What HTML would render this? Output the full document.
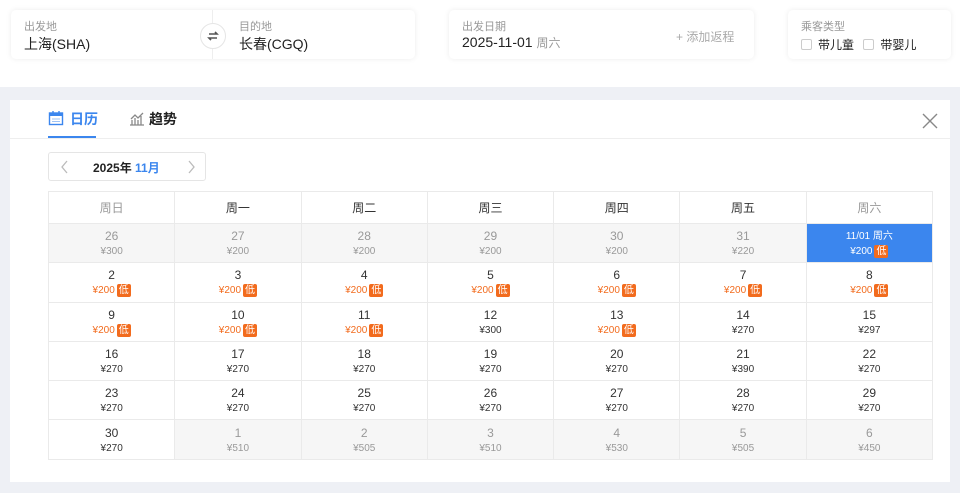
<!DOCTYPE html>
<html><head><meta charset="utf-8"><style>
*{margin:0;padding:0;box-sizing:border-box}
body{width:960px;height:493px;background:#fff;font-family:"Liberation Sans","Noto Sans CJK SC",sans-serif;position:relative;overflow:hidden;color:#222}
.card{position:absolute;top:10px;height:49px;background:#fff;border-radius:5px;box-shadow:0 0 6px rgba(0,0,0,.08)}
.lab{position:absolute;top:8px;font-size:11px;color:#999}
.val{position:absolute;top:24px;font-size:14px;color:#222}
.band{position:absolute;left:0;top:87px;width:960px;height:406px;background:#eef0f5}
.panel{position:absolute;left:10px;top:100px;width:940px;height:382px;background:#fff}
table{position:absolute;left:48px;top:191px;border-collapse:collapse;table-layout:fixed;width:885px}
td,th{border:1px solid #eaeaea;text-align:center;font-weight:normal;font-size:12px}
th{height:32px;color:#333}
th.g{color:#999}
td{height:39.3px;line-height:15px;padding-top:2px}
td .d{font-size:12px;color:#333}
td .p{font-size:10px;color:#333}
td.o{background:#f6f6f6}
td.o .d,td.o .p{color:#999}
td .p.l{color:#f26b1d}
.b{display:inline-block;background:#f26b1d;color:#fff;font-size:10px;line-height:13px;padding:0 2px;margin-left:2px;border-radius:2px}
td.s{background:#3b86ee}
td.s .d,td.s .p{color:#fff}
.cb{display:inline-block;width:11px;height:11px;border:1px solid #ccc;border-radius:2px;vertical-align:-1px;margin-right:6px}
</style></head><body>
<div class="card" style="left:11px;width:404px">
 <div class="lab" style="left:13px">出发地</div><div class="val" style="left:13px">上海(SHA)</div>
 <div style="position:absolute;left:201px;top:0;width:1px;height:49px;background:#eee"></div>
 <div style="position:absolute;left:189px;top:13px;width:26px;height:26px;border:1px solid #e5e5e5;border-radius:50%;background:#fff">
  <svg width="24" height="24" viewBox="0 0 24 24" style="position:absolute;left:0;top:0"><path d="M8 10h8l-2-2M16 14H8l2 2" stroke="#555" stroke-width="1.6" fill="none"/></svg></div>
 <div class="lab" style="left:228px">目的地</div><div class="val" style="left:228px">长春(CGQ)</div>
</div>
<div class="card" style="left:449px;width:305px">
 <div class="lab" style="left:13px">出发日期</div><div class="val" style="left:13px">2025-11-01 <span style="color:#999;font-size:12px">周六</span></div>
 <div style="position:absolute;left:227px;top:18px;font-size:12px;color:#aaa">+ 添加返程</div>
</div>
<div class="card" style="left:788px;width:163px">
 <div class="lab" style="left:13px">乘客类型</div>
 <div class="val" style="left:13px;font-size:12px;top:26px"><span class="cb"></span>带儿童 <span class="cb" style="margin-left:6px"></span>带婴儿</div>
</div>
<div class="band"></div>
<div class="panel">
 <svg width="16" height="16" viewBox="0 0 16 16" style="position:absolute;left:38px;top:10px"><rect x="1.5" y="3" width="13" height="11.5" fill="none" stroke="#3b86ee" stroke-width="1.4"/><rect x="1.5" y="3" width="13" height="3" fill="#3b86ee"/><path d="M5 1v3M11 1v3" stroke="#3b86ee" stroke-width="1.4"/><path d="M4.5 9h7M4.5 11.5h7" stroke="#3b86ee" stroke-width="1" stroke-dasharray="1 1"/></svg>
 <div style="position:absolute;left:60px;top:9px;font-size:14px;color:#3b86ee;font-weight:bold">日历</div>
 <div style="position:absolute;left:38px;top:36px;width:48px;height:2px;background:#3b86ee"></div>
 <svg width="16" height="16" viewBox="0 0 16 16" style="position:absolute;left:119px;top:10px"><path d="M1 15h14M3 15V10M6 15V8M9 15V10M12 15V6M2 9l4-4 3 3 5-5" stroke="#888" stroke-width="1.3" fill="none"/></svg>
 <div style="position:absolute;left:139px;top:9px;font-size:14px;color:#222;font-weight:bold">趋势</div>
 <div style="position:absolute;left:0;top:38px;width:940px;height:1px;background:#eee"></div>
 <svg width="20" height="20" viewBox="0 0 20 20" style="position:absolute;left:910px;top:11px"><path d="M3 3l14 14M17 3L3 17" stroke="#888" stroke-width="1.4"/></svg>
 <div style="position:absolute;left:38px;top:52px;width:158px;height:29px;border:1px solid #e5e5e5;border-radius:3px">
  <svg width="10" height="14" viewBox="0 0 10 14" style="position:absolute;left:11px;top:7px"><path d="M7 1L2 7l5 6" stroke="#bbb" stroke-width="1.3" fill="none"/></svg>
  <span style="position:absolute;left:44px;top:6px;font-size:12px;font-weight:bold">2025年 <span style="color:#3b86ee">11月</span></span>
  <svg width="10" height="14" viewBox="0 0 10 14" style="position:absolute;left:137px;top:7px"><path d="M3 1l5 6-5 6" stroke="#bbb" stroke-width="1.3" fill="none"/></svg>
 </div>
</div>
<table>
<tr><th class="g">周日</th><th>周一</th><th>周二</th><th>周三</th><th>周四</th><th>周五</th><th class="g">周六</th></tr>
<tr><td class="o"><div class="d">26</div><div class="p">¥300</div></td><td class="o"><div class="d">27</div><div class="p">¥200</div></td><td class="o"><div class="d">28</div><div class="p">¥200</div></td><td class="o"><div class="d">29</div><div class="p">¥200</div></td><td class="o"><div class="d">30</div><div class="p">¥200</div></td><td class="o"><div class="d">31</div><div class="p">¥220</div></td><td class="s"><div class="d" style="font-size:10px">11/01 周六</div><div class="p">¥200<span class="b">低</span></div></td></tr>
<tr><td><div class="d">2</div><div class="p l">¥200<span class="b">低</span></div></td><td><div class="d">3</div><div class="p l">¥200<span class="b">低</span></div></td><td><div class="d">4</div><div class="p l">¥200<span class="b">低</span></div></td><td><div class="d">5</div><div class="p l">¥200<span class="b">低</span></div></td><td><div class="d">6</div><div class="p l">¥200<span class="b">低</span></div></td><td><div class="d">7</div><div class="p l">¥200<span class="b">低</span></div></td><td><div class="d">8</div><div class="p l">¥200<span class="b">低</span></div></td></tr>
<tr><td><div class="d">9</div><div class="p l">¥200<span class="b">低</span></div></td><td><div class="d">10</div><div class="p l">¥200<span class="b">低</span></div></td><td><div class="d">11</div><div class="p l">¥200<span class="b">低</span></div></td><td><div class="d">12</div><div class="p">¥300</div></td><td><div class="d">13</div><div class="p l">¥200<span class="b">低</span></div></td><td><div class="d">14</div><div class="p">¥270</div></td><td><div class="d">15</div><div class="p">¥297</div></td></tr>
<tr><td><div class="d">16</div><div class="p">¥270</div></td><td><div class="d">17</div><div class="p">¥270</div></td><td><div class="d">18</div><div class="p">¥270</div></td><td><div class="d">19</div><div class="p">¥270</div></td><td><div class="d">20</div><div class="p">¥270</div></td><td><div class="d">21</div><div class="p">¥390</div></td><td><div class="d">22</div><div class="p">¥270</div></td></tr>
<tr><td><div class="d">23</div><div class="p">¥270</div></td><td><div class="d">24</div><div class="p">¥270</div></td><td><div class="d">25</div><div class="p">¥270</div></td><td><div class="d">26</div><div class="p">¥270</div></td><td><div class="d">27</div><div class="p">¥270</div></td><td><div class="d">28</div><div class="p">¥270</div></td><td><div class="d">29</div><div class="p">¥270</div></td></tr>
<tr><td><div class="d">30</div><div class="p">¥270</div></td><td class="o"><div class="d">1</div><div class="p">¥510</div></td><td class="o"><div class="d">2</div><div class="p">¥505</div></td><td class="o"><div class="d">3</div><div class="p">¥510</div></td><td class="o"><div class="d">4</div><div class="p">¥530</div></td><td class="o"><div class="d">5</div><div class="p">¥505</div></td><td class="o"><div class="d">6</div><div class="p">¥450</div></td></tr>
</table>
</body></html>
